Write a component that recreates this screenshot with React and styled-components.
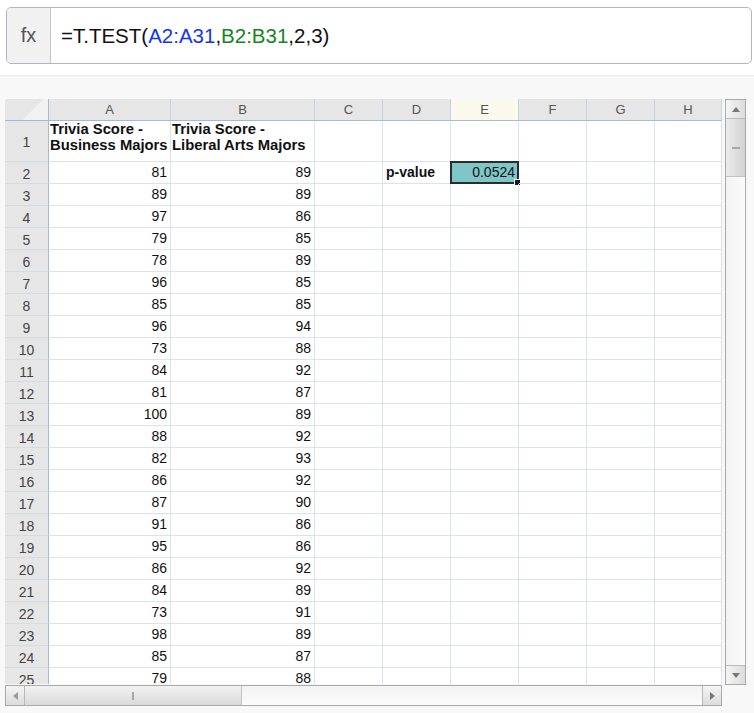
import React from "react";
import styled, { createGlobalStyle, css } from "styled-components";

const GlobalStyle = createGlobalStyle`
  html, body {
    margin: 0;
    padding: 0;
    background: #f8f8f8;
    font-family: "Liberation Sans", Arial, sans-serif;
  }
`;

const Page = styled.div`
  width: 754px;
  height: 713px;
  overflow: hidden;
  background: #f8f8f8;
`;

const Top = styled.div`
  background: #ffffff;
  padding: 7px 2px 11px 6px;
  border-bottom: 1px solid #ececec;
`;

const FormulaBar = styled.div`
  display: flex;
  height: 55px;
  border: 1px solid #b4b4bf;
  border-radius: 5px;
  overflow: hidden;
  background: #fff;
`;

const Fx = styled.div`
  width: 43px;
  display: flex;
  align-items: center;
  justify-content: center;
  background: #f1f1f1;
  border-right: 1px solid #c6c6c6;
  color: #555;
  font-size: 20px;
`;

const Formula = styled.div`
  display: flex;
  align-items: center;
  padding-left: 10px;
  font-size: 20.5px;
  color: #111;
`;

const Ref = styled.span`
  color: ${(p) => p.color};
`;

const SheetArea = styled.div`
  padding: 23px 0 0 5px;
`;

const SheetRow = styled.div`
  display: flex;
`;

const Viewport = styled.div`
  width: 717px;
  height: 585px;
  overflow: hidden;
  background: #fff;
`;

const Grid = styled.div`
  display: grid;
  grid-template-columns: 44px 122px 144px 68px 68px 68px 68px 68px 67px;
  grid-auto-rows: 22px;
  grid-template-rows: 22px 41px;
`;

const Corner = styled.div`
  background: linear-gradient(135deg, #e6e6e6 60%, #f2f2f2 61%);
  border-right: 1px solid #9dbcd8;
  border-bottom: 1px solid #9dbcd8;
`;

const ColHead = styled.div`
  background: ${(p) => (p.active ? "#fbf8ee" : "#e6e6e6")};
  border-right: 1px solid #c4d4e4;
  border-bottom: 1px solid #9dbcd8;
  color: #555;
  font-size: 13px;
  display: flex;
  align-items: center;
  justify-content: center;
`;

const RowHead = styled.div`
  background: #e6e6e6;
  border-right: 1px solid #9dbcd8;
  border-bottom: 1px solid #d3dbe5;
  color: #444;
  font-size: 14px;
  display: flex;
  align-items: center;
  justify-content: center;
  padding-top: 2px;
  box-sizing: border-box;
`;

const Cell = styled.div`
  position: relative;
  box-sizing: border-box;
  border-right: 1px solid #dbe2ec;
  border-bottom: 1px solid #dbe2ec;
  font-size: 14px;
  color: #111;
  padding: 0 3px 1px;
  display: flex;
  align-items: center;
  white-space: nowrap;
  justify-content: ${(p) => (p.right ? "flex-end" : "flex-start")};
  ${(p) =>
    p.bold &&
    css`
      font-weight: bold;
    `}
  ${(p) =>
    p.title &&
    css`
      display: block;
      font-size: 14.8px;
      line-height: 16px;
      padding: 0 1px;
    `}
  ${(p) =>
    p.selected &&
    css`
      background: #7fc6c9;
      border: 2px solid #2c2c2c;
      margin: -1px 0 0 -1px;
      padding-right: 2px;
    `}
`;

const Handle = styled.span`
  position: absolute;
  right: -4px;
  bottom: -4px;
  width: 5px;
  height: 5px;
  background: #1a1a1a;
  border: 1px solid #fff;
`;

const VScroll = styled.div`
  width: 19px;
  height: 584px;
  margin-left: 3px;
  border: 1px solid #a9a9a9;
  background: linear-gradient(90deg, #f3f3f3, #fbfbfb);
  display: flex;
  flex-direction: column;
`;

const HScroll = styled.div`
  width: 715px;
  height: 19px;
  border: 1px solid #a9a9a9;
  background: linear-gradient(180deg, #f3f3f3, #fbfbfb);
  display: flex;
`;

const Arrow = styled.div`
  flex: none;
  width: 19px;
  height: 19px;
  box-sizing: border-box;
  background: ${(p) =>
    p.vertical
      ? "linear-gradient(90deg, #f4f4f4, #dcdcdc)"
      : "linear-gradient(180deg, #f4f4f4, #dcdcdc)"};
  display: flex;
  align-items: center;
  justify-content: center;
  ${(p) => p.edge === "top" && "border-bottom: 1px solid #b9b9b9;"}
  ${(p) => p.edge === "bottom" && "border-top: 1px solid #b9b9b9;"}
  ${(p) => p.edge === "left" && "border-right: 1px solid #b9b9b9;"}
  ${(p) => p.edge === "right" && "border-left: 1px solid #b9b9b9;"}
`;

const Thumb = styled.div`
  flex: none;
  box-sizing: border-box;
  display: flex;
  align-items: center;
  justify-content: center;
  ${(p) =>
    p.vertical
      ? css`
          height: 58px;
          background: linear-gradient(90deg, #ececec, #d2d2d2);
          border-bottom: 1px solid #c2c2c2;
        `
      : css`
          width: 217px;
          background: linear-gradient(180deg, #f2f2f2, #dadada);
          border-right: 1px solid #c2c2c2;
        `}
`;

const Grip = styled.span`
  background: #a8a8a8;
  width: ${(p) => (p.vertical ? "8px" : "2px")};
  height: ${(p) => (p.vertical ? "2px" : "8px")};
`;

const Spacer = styled.div`
  flex: 1;
`;

const Tri = ({ dir }) => {
  const pts = {
    up: "0,5 4,0 8,5",
    down: "0,0 8,0 4,5",
    left: "5,0 5,8 0,4",
    right: "0,0 5,4 0,8",
  }[dir];
  const vert = dir === "up" || dir === "down";
  return (
    <svg width={vert ? 8 : 5} height={vert ? 5 : 8}>
      <polygon points={pts} fill={dir === "left" ? "#999" : "#777"} />
    </svg>
  );
};

const colsA = [81, 89, 97, 79, 78, 96, 85, 96, 73, 84, 81, 100, 88, 82, 86, 87, 91, 95, 86, 84, 73, 98, 85, 79];
const colsB = [89, 89, 86, 85, 89, 85, 85, 94, 88, 92, 87, 89, 92, 93, 92, 90, 86, 86, 92, 89, 91, 89, 87, 88];
const letters = ["A", "B", "C", "D", "E", "F", "G", "H"];

export default function App() {
  return (
    <Page>
      <GlobalStyle />
      <Top>
        <FormulaBar>
          <Fx>fx</Fx>
          <Formula>
            =T.TEST(<Ref color="#1436f0">A2:A31</Ref>,<Ref color="#13861e">B2:B31</Ref>,2,3)
          </Formula>
        </FormulaBar>
      </Top>
      <SheetArea>
        <SheetRow>
          <Viewport>
            <Grid>
              <Corner />
              {letters.map((l) => (
                <ColHead key={l} active={l === "E"}>
                  {l}
                </ColHead>
              ))}
              <RowHead>1</RowHead>
              <Cell title="1" bold>
                Trivia Score -<br />
                Business Majors
              </Cell>
              <Cell title="1" bold>
                Trivia Score -<br />
                Liberal Arts Majors
              </Cell>
              {[0, 1, 2, 3, 4, 5].map((i) => (
                <Cell key={i} />
              ))}
              {colsA.map((a, i) => {
                const r = i + 2;
                return (
                  <React.Fragment key={r}>
                    <RowHead>{r}</RowHead>
                    <Cell right>{a}</Cell>
                    <Cell right>{colsB[i]}</Cell>
                    <Cell />
                    {r === 2 ? <Cell bold>p-value</Cell> : <Cell />}
                    {r === 2 ? (
                      <Cell right selected>
                        0.0524
                        <Handle />
                      </Cell>
                    ) : (
                      <Cell />
                    )}
                    <Cell />
                    <Cell />
                    <Cell />
                  </React.Fragment>
                );
              })}
            </Grid>
          </Viewport>
          <VScroll>
            <Arrow vertical edge="top">
              <Tri dir="up" />
            </Arrow>
            <Thumb vertical>
              <Grip vertical />
            </Thumb>
            <Spacer />
            <Arrow vertical edge="bottom">
              <Tri dir="down" />
            </Arrow>
          </VScroll>
        </SheetRow>
        <HScroll>
          <Arrow edge="left">
            <Tri dir="left" />
          </Arrow>
          <Thumb>
            <Grip />
          </Thumb>
          <Spacer />
          <Arrow edge="right">
            <Tri dir="right" />
          </Arrow>
        </HScroll>
      </SheetArea>
    </Page>
  );
}
